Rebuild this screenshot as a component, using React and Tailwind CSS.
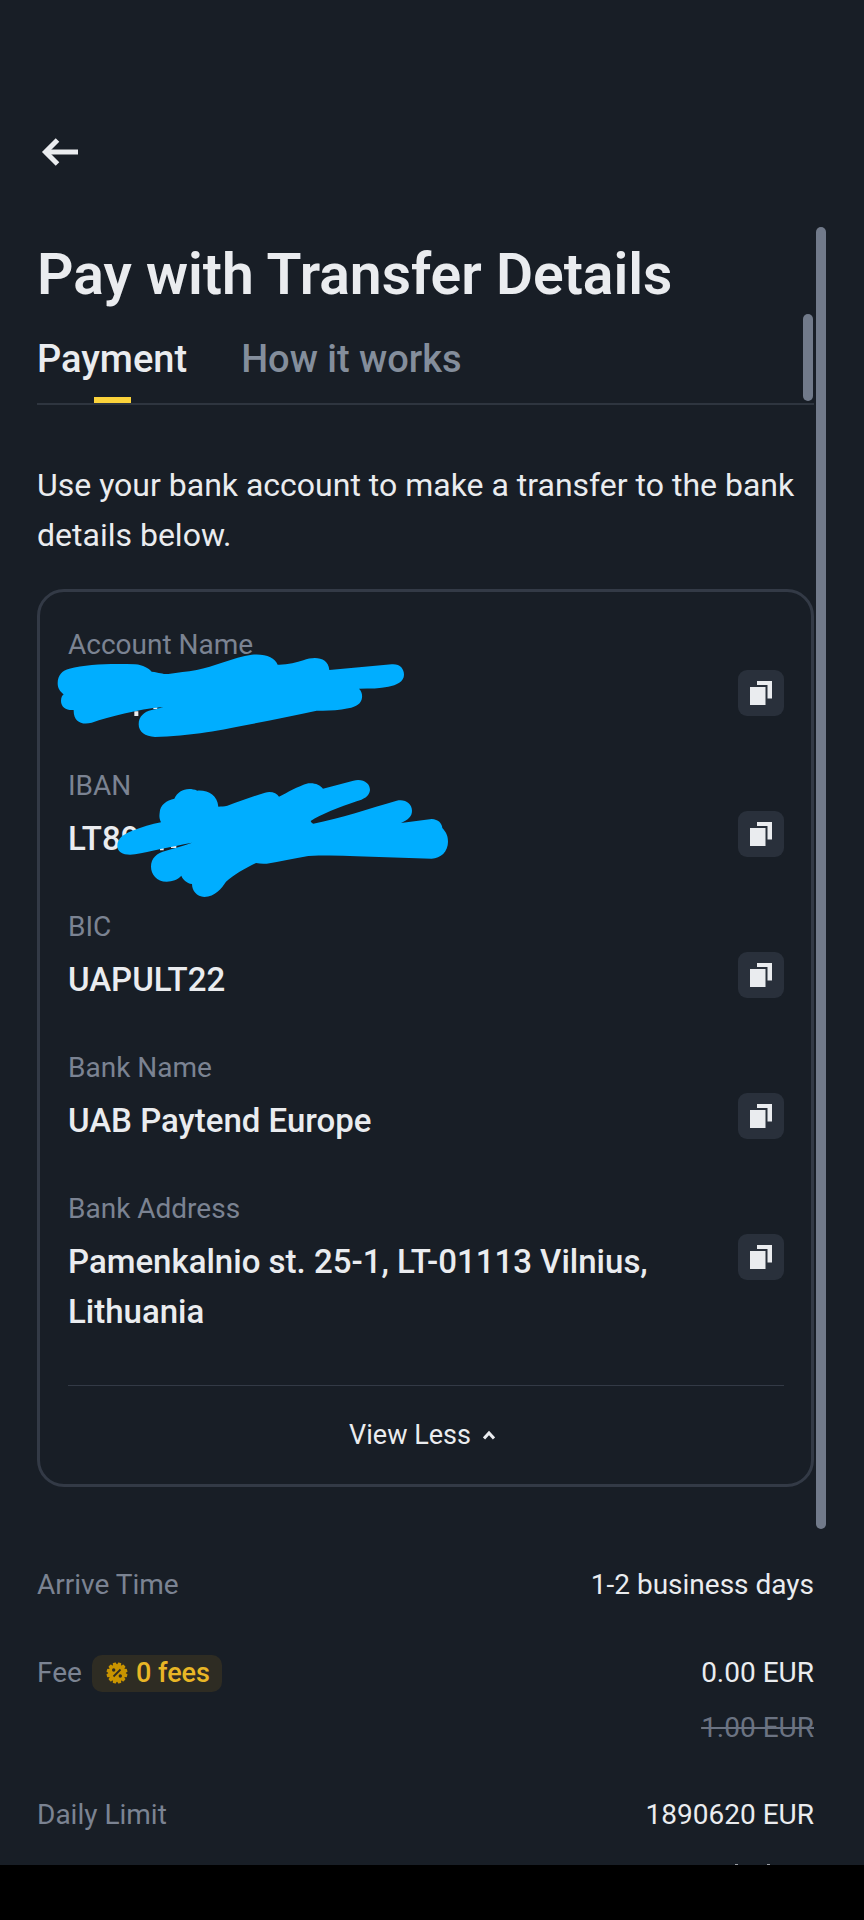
import React, { useState } from 'react';
import { clsx } from 'clsx';

const DETAILS = [
  { label: 'Account Name', value: '' },
  { label: 'IBAN', value: 'LT89' },
  { label: 'BIC', value: 'UAPULT22' },
  { label: 'Bank Name', value: 'UAB Paytend Europe' },
  { label: 'Bank Address', value: 'Pamenkalnio st. 25-1, LT-01113 Vilnius, Lithuania' },
];

const TABS = ['Payment', 'How it works'];

const BackIcon = () => (
  <svg viewBox="0 0 48 48" className="size-12" fill="none" stroke="currentColor" strokeWidth="5">
    <path d="M41 24H10" />
    <path d="M20.500 12 8.500 24l12 12" />
  </svg>
);

const CopyIcon = () => (
  <svg viewBox="0 0 24 26" className="h-[26px] w-6" fill="currentColor">
    <path d="M8 1h15v17.500h-4.500V5H8z" />
    <path d="M1 7h15.500v18H1z" />
  </svg>
);

const ChevronUp = () => (
  <svg viewBox="0 0 12 10" className="h-[10px] w-3" fill="none" stroke="currentColor" strokeWidth="3">
    <path d="M1 8.500 6 3l5 5.500" />
  </svg>
);

const PercentBadge = () => (
  <svg viewBox="0 0 22 22" className="size-[22px]">
    <g fill="#c99400">
      <circle cx="11" cy="11" r="9" />
      {[0, 30, 60, 90, 120, 150].map(a => (
        <rect key={a} x="9.200" y="0.500" width="3.600" height="21" rx="0.800" transform={`rotate(${a + 15} 11 11)`} />
      ))}
    </g>
    <path d="M7.500 14.500l7-7" stroke="#2e2c23" strokeWidth="1.800" />
    <circle cx="7.700" cy="8" r="1.700" fill="#2e2c23" />
    <circle cx="14.300" cy="14" r="1.700" fill="#2e2c23" />
  </svg>
);

// Marker strokes that hide the private values
const Redaction = () => (
  <svg viewBox="0 0 1380 1080" className="pointer-events-none absolute -left-5 -top-[22px] w-[460px]" aria-hidden="true">
    <g fill="#eaecef">
      <path d="M343 424h12v14h-12zM400 412h12v5h-12zM420 834h11v7h-11zM453 826h16v8h-16z" />
    </g>
    <g fill="#00aeff">
      <path d="M113 340C113 315 128 300 148 296C200 282 280 280 345 283C370 285 385 295 395 305C420 308 430 313 445 312C475 308 500 305 530 300C580 290 640 262 695 254C735 250 765 262 773 284C800 285 830 278 850 271C885 258 925 262 928 300L1115 283C1140 281 1152 296 1152 314C1152 335 1130 345 1105 350C1080 356 1050 355 1017 356C1026 365 1027 375 1026 383C1024 400 1010 410 985 415C950 422 920 423 890 422C780 445 650 472 560 487C510 495 450 500 405 501C375 500 356 485 356 463C356 440 372 425 395 420C410 417 425 413 430 411C350 418 270 440 215 458C185 466 160 455 161 420C140 422 123 412 123 393C123 382 127 376 131 373C120 365 113 355 113 340Z" />
      <path d="M292 828C292 805 310 793 335 783C365 772 395 762 423 757C417 745 418 735 419 728C420 705 440 690 463 686C475 662 500 650 532 662C565 660 592 675 595 710C605 709 612 709 622 707C660 694 695 680 735 668C755 663 770 670 777 680C805 667 830 650 865 640C885 638 900 645 909 656L1000 632C1030 625 1050 640 1050 660C1048 680 1030 688 1010 694C960 710 900 735 872 753C874 757 876 760 880 761C960 745 1050 715 1130 692C1155 686 1176 700 1176 722C1176 740 1165 748 1143 759L1235 747C1255 748 1266 760 1267 774C1280 788 1284 800 1284 815C1284 845 1262 865 1235 866L1010 859C960 856 910 856 865 858C820 866 780 875 740 881C728 882 718 881 708 879C675 895 640 915 618 935C605 955 585 980 553 981C530 980 516 962 516 942C500 940 488 928 484 917C472 930 458 934 440 935C410 935 393 912 393 890C393 865 410 848 438 842C465 835 495 825 516 818C450 830 390 845 345 853C315 858 292 848 292 828Z" />
    </g>
  </svg>
);

const App = () => {
  const [tab, setTab] = useState('Payment');
  const [expanded, setExpanded] = useState(true);

  const copy = (text) => navigator.clipboard?.writeText(text);
  const rows = expanded ? DETAILS : DETAILS.slice(0, 2);

  return (
    <div className="flex min-h-screen flex-col bg-black font-['Roboto',sans-serif] text-[#eaecef]">
      <div className="relative overflow-hidden bg-[#181e26] pl-[37px] pr-[50px] pt-32">
        <header>
          <button aria-label="Back" className="block"><BackIcon /></button>
          <h1 className="mt-[67px] text-[57px] font-semibold leading-[64px]">Pay with Transfer Details</h1>
        </header>

        <nav className="relative mt-7 flex gap-[54px] border-b-2 border-[#2e353f]">
          {TABS.map(t => (
            <button
              key={t}
              onClick={() => setTab(t)}
              className={clsx('flex flex-col items-center text-[38px] font-medium leading-[48px]', t !== tab && 'text-[#848e9c]')}
            >
              {t}
              <span className={clsx('mt-[14px] h-[6px] w-[37px]', t === tab && 'bg-[#fbd33b]')} />
            </button>
          ))}
          <span className="absolute bottom-[2px] right-px h-[87px] w-[10px] rounded-full bg-[#717a8a]" />
        </nav>

        <p className="mt-[55px] text-[32px] leading-[50px]">
          Use your bank account to make a transfer to the bank details below.
        </p>

        <section className="relative mt-[29px] rounded-[27px] border-3 border-[#333a46] pl-7 pr-[27px] pt-8">
          <dl>
            {rows.map(({ label, value }) => (
              <div key={label} className="mb-[27px] flex items-start justify-between gap-8">
                <div className="min-h-[114px]">
                  <dt className="text-[28px] leading-[42px] text-[#7b8392]">{label}</dt>
                  <dd className="mt-[7px] max-w-[600px] text-[33px] font-medium leading-[50px]">{value}</dd>
                </div>
                <button
                  aria-label={`Copy ${label}`}
                  onClick={() => copy(value)}
                  className="mt-[46px] flex size-[46px] shrink-0 items-center justify-center rounded-[9px] bg-[#29303b]"
                >
                  <CopyIcon />
                </button>
              </div>
            ))}
          </dl>
          <div className="mt-12 border-t border-[#333a46]">
            <button
              onClick={() => setExpanded(!expanded)}
              className="flex w-full items-center justify-center gap-3 py-7 pr-2 text-[27px] leading-[42px]"
            >
              View {expanded ? 'Less' : 'More'}
              <ChevronUp />
            </button>
          </div>
          <Redaction />
        </section>

        <dl className="mt-[78px] text-[28px] leading-[40px]">
          <div className="flex justify-between">
            <dt className="text-[#7b8392]">Arrive Time</dt>
            <dd>1-2 business days</dd>
          </div>
          <div className="mt-12 flex items-start justify-between">
            <dt className="flex items-center gap-[10px] text-[#7b8392]">
              Fee
              <span className="flex items-center gap-2 rounded-[10px] bg-[#2e2c23] pl-[14px] pr-3 text-[27px] font-medium leading-[37px] text-[#e9b626]">
                <PercentBadge />
                0 fees
              </span>
            </dt>
            <dd className="text-right">
              0.00 EUR
              <s className="mt-[15px] block text-[#6b7382] decoration-2">1.00 EUR</s>
            </dd>
          </div>
          <div className="mt-[47px] flex justify-between">
            <dt className="text-[#7b8392]">Daily Limit</dt>
            <dd>1890620 EUR</dd>
          </div>
        </dl>
        {/* top edge of the next row, cut off by the bottom bar */}
        <div className="mt-[29px] flex justify-end gap-[29px] pr-11">
          <span className="h-px w-[3px] bg-[#9a9ea5]" />
          <span className="h-px w-[3px] bg-[#9a9ea5]" />
        </div>
        <span className="absolute right-[38px] top-[227px] h-[1302px] w-[10px] rounded-full bg-[#717a8a]" />
      </div>
    </div>
  );
};

export default App;
